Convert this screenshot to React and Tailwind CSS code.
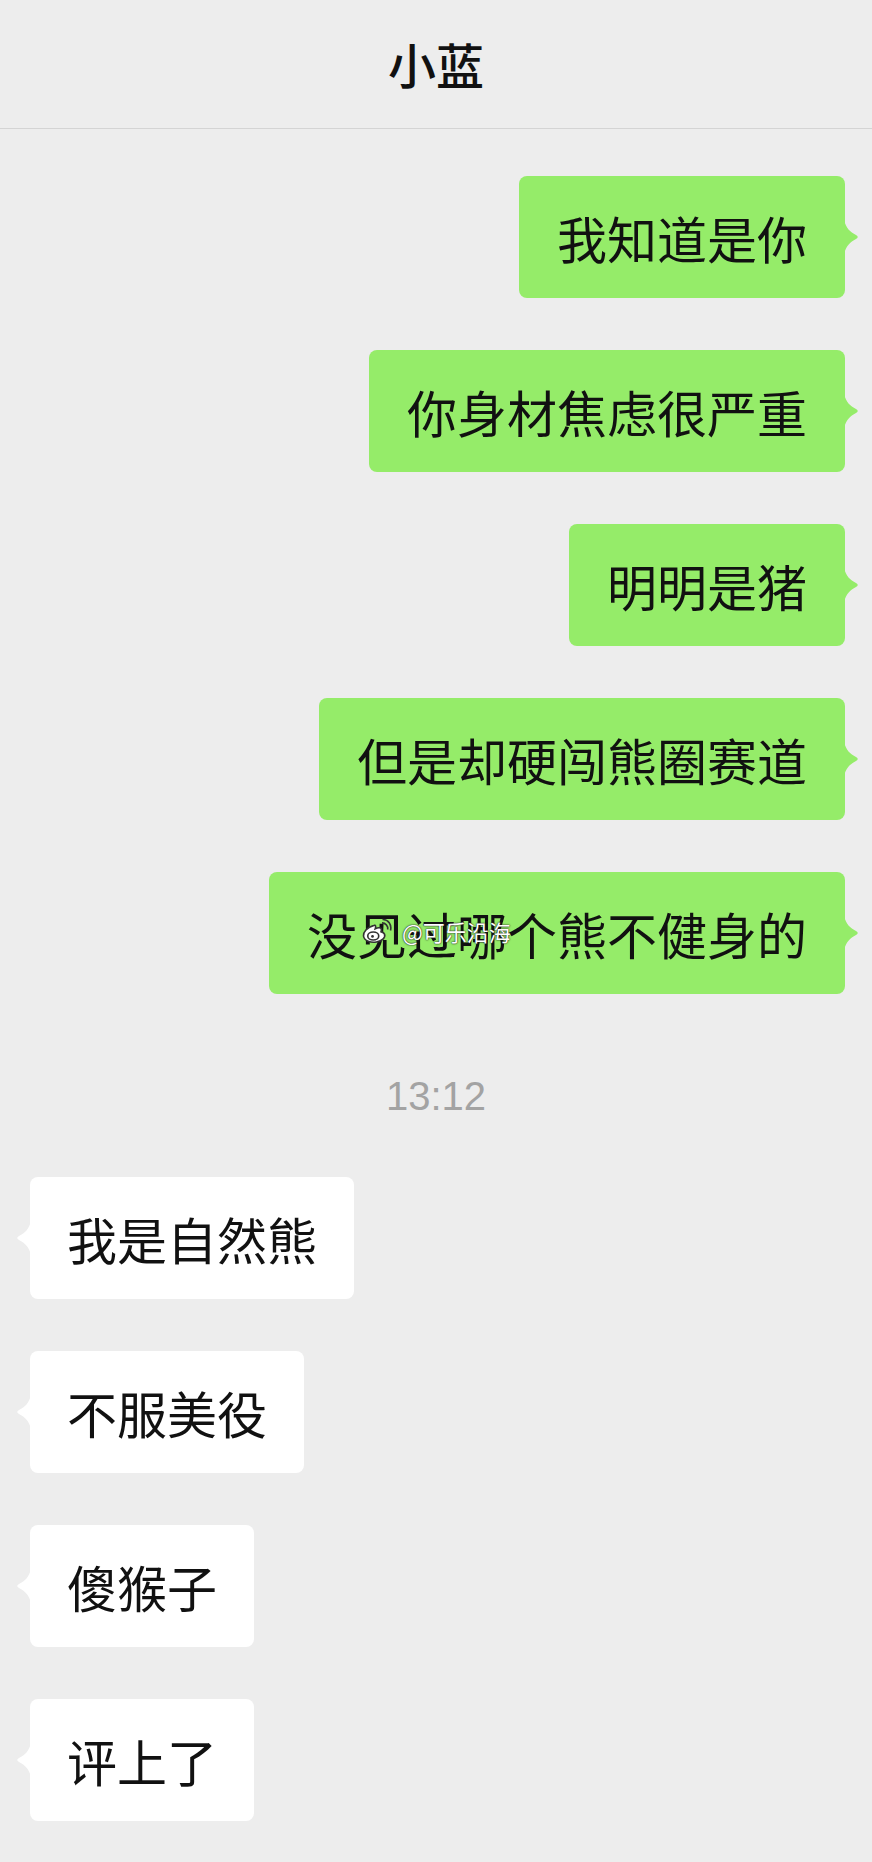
const font = { fontFamily: '"Noto Sans CJK SC", "Noto Sans", sans-serif' };

const sent = [
  "我知道是你",
  "你身材焦虑很严重",
  "明明是猪",
  "但是却硬闯熊圈赛道",
  "没见过哪个熊不健身的",
];

const received = ["我是自然熊", "不服美役", "傻猴子", "评上了"];

const Tail = ({ side, color }) => (
  <svg
    width="16"
    height="34"
    viewBox="0 0 16 34"
    className={
      side === "right"
        ? "absolute right-[-15px] top-1/2 -translate-y-1/2"
        : "absolute left-[-15px] top-1/2 -translate-y-1/2 -scale-x-100"
    }
  >
    <path
      d="M0 0 C2 8 6 12 12 15 Q15.5 17 12 19 C6 22 2 26 0 34 Z"
      fill={color}
    />
  </svg>
);

const Watermark = () => (
  <div className="absolute left-[93px] top-[46px] flex items-center gap-[10px] pointer-events-none">
    <svg width="30" height="26" viewBox="0 0 24 20">
      <g fill="white" stroke="#333" strokeWidth="1.3">
        <path d="M9.5 5.5 C4 7 0.8 11 1.2 14 C1.8 18 7 19.5 11.5 18.8 C16.5 18 19 15 18 12.5 C17.4 11 15.8 10.8 15.2 10.6 C15.8 9 15.6 7.6 14 7.4 C12.6 7.2 11 8 10.6 8.2 C11.2 6.4 11 5 9.5 5.5 Z" />
        <ellipse cx="9" cy="14" rx="4.4" ry="3.2" />
        <circle cx="8.4" cy="14.3" r="1.1" fill="#333" stroke="none" />
        <path d="M16 3.5 C18.8 3.5 21 6 20.6 8.8" fill="none" />
        <path d="M16.4 0.8 C21 0.5 24 5 22.8 9.6" fill="none" />
      </g>
    </svg>
    <span
      className="text-[22px] leading-none text-white whitespace-nowrap"
      style={{ ...font, textShadow: "0 0 2px #222, 0 0 1px #222" }}
    >
      @可乐沿海
    </span>
  </div>
);

export default function App() {
  return (
    <div className="min-h-[1862px] w-full bg-[#ededed]" style={font}>
      <header className="h-[129px] flex items-center justify-center border-b border-[#d4d4d4]">
        <h1 className="text-[48px] font-medium text-[#111] leading-none pb-[3px]">
          小蓝
        </h1>
      </header>

      <div className="flex flex-col items-end gap-[52px] pt-[47px] pr-[27px]">
        {sent.map((msg, i) => (
          <div
            key={i}
            className="relative h-[122px] flex items-center px-[38px] rounded-lg bg-[#95ec69] text-[50px] text-[#111] leading-none"
          >
            {msg}
            <Tail side="right" color="#95ec69" />
            {i === sent.length - 1 && <Watermark />}
          </div>
        ))}
      </div>

      <div
        className="h-[183px] pt-[20px] flex items-center justify-center text-[40px] text-[#a3a3a3] leading-none"
        style={{ fontFamily: '"Liberation Sans", Arial, sans-serif' }}
      >
        13:12
      </div>

      <div className="flex flex-col items-start gap-[52px] pl-[30px] pb-[39px]">
        {received.map((msg, i) => (
          <div
            key={i}
            className="relative h-[122px] flex items-center px-[37px] rounded-lg bg-white text-[50px] text-[#111] leading-none"
          >
            {msg}
            <Tail side="left" color="#ffffff" />
          </div>
        ))}
      </div>
    </div>
  );
}
